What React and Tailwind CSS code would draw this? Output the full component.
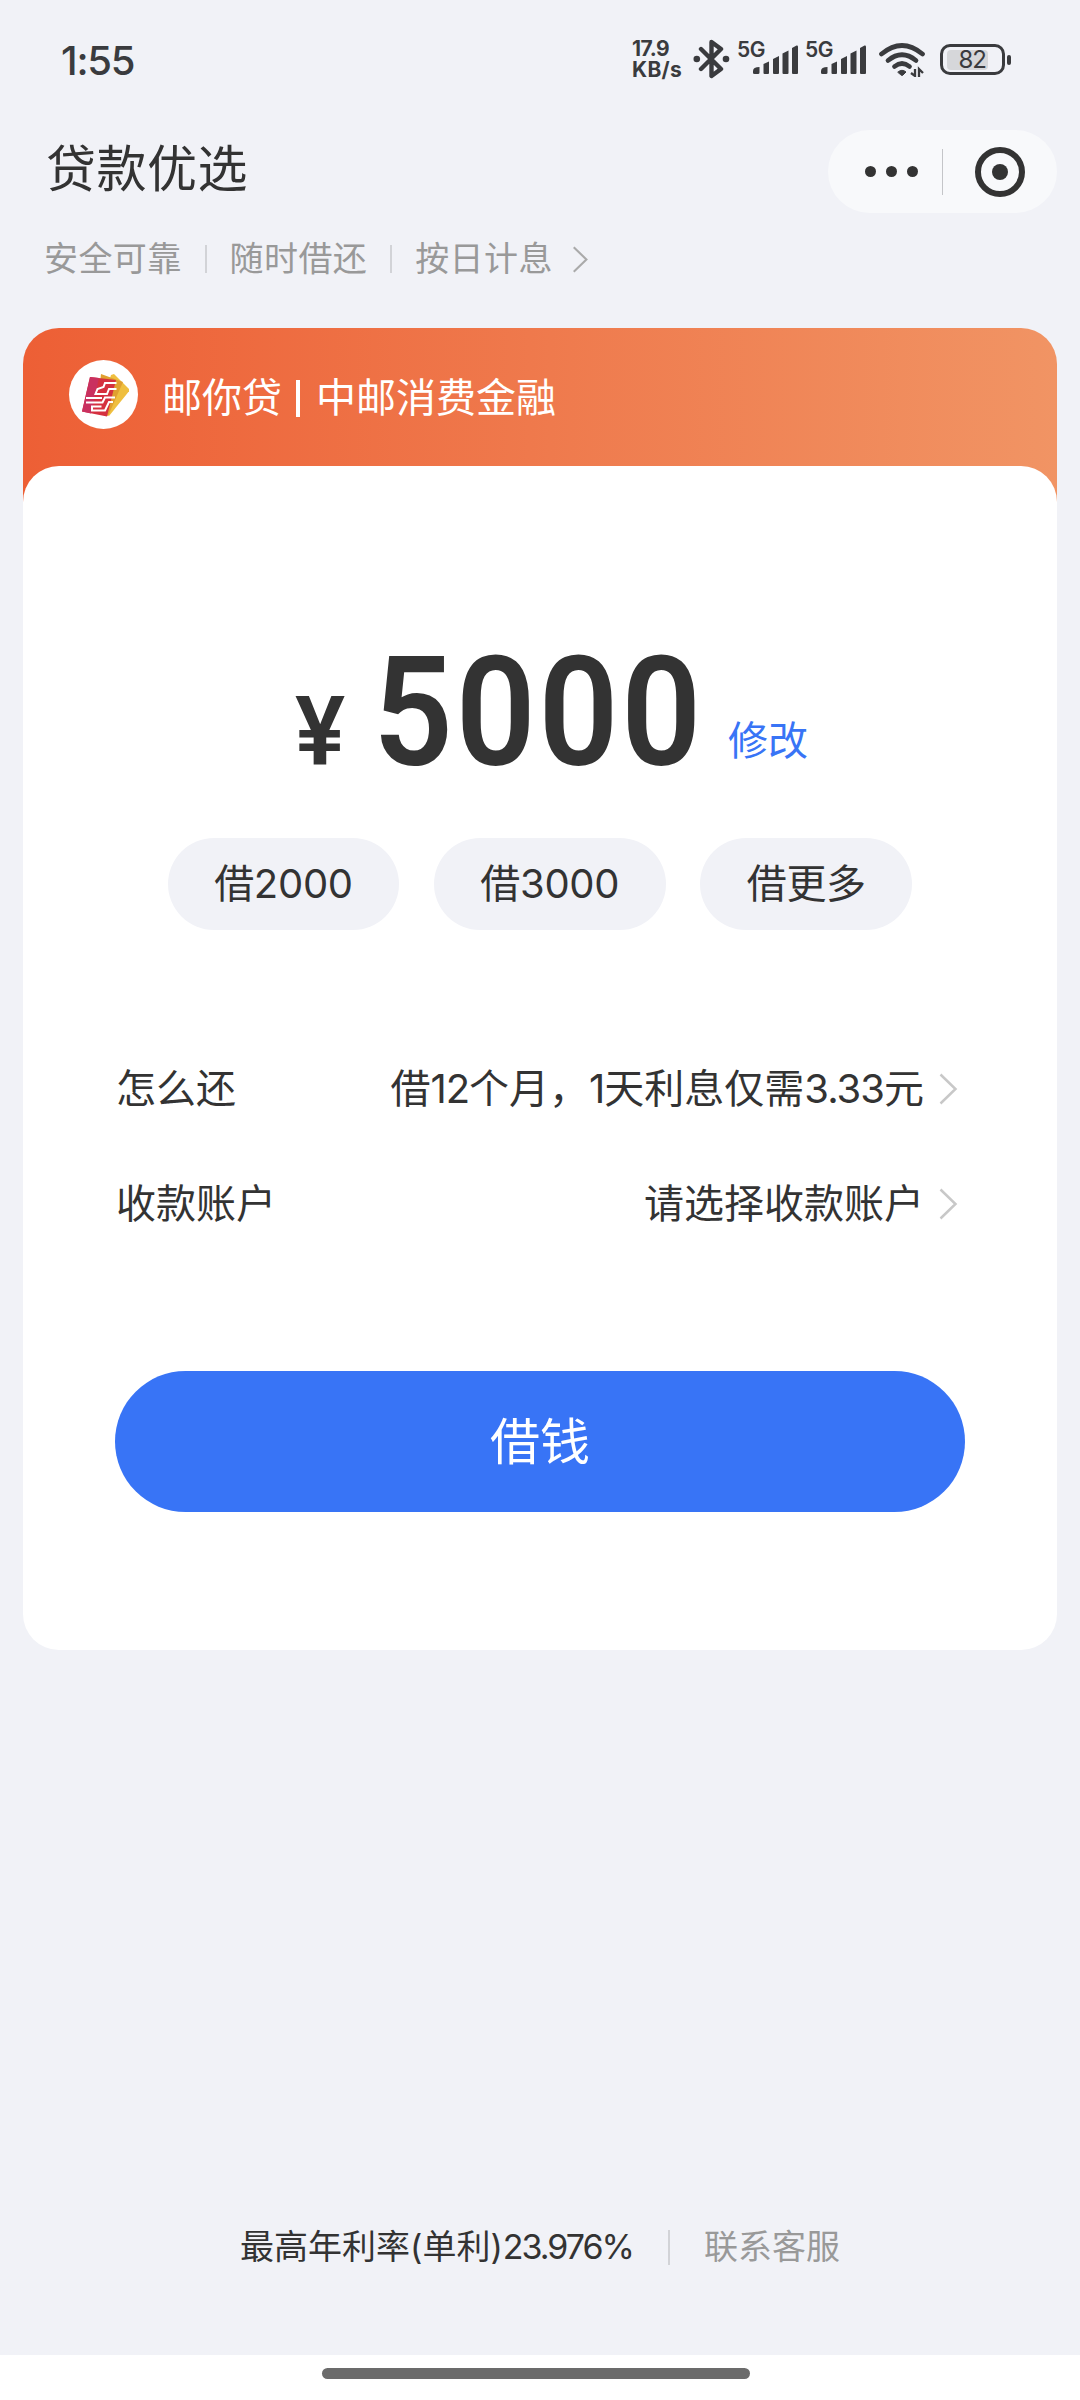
function Bluetooth() {
  return (
    <svg width="37" height="40" viewBox="0 0 37 40" fill="none" stroke="#3a3b3e" strokeWidth="4.4" strokeLinejoin="round" strokeLinecap="round">
      <path d="M8 10 L28 30 L18.500 37 V3 L28 10 L8 30" />
      <circle cx="3.800" cy="20" r="3.300" fill="#3a3b3e" stroke="none" />
      <circle cx="33" cy="20" r="3.300" fill="#3a3b3e" stroke="none" />
    </svg>
  )
}

function Signal() {
  return (
    <svg className="-ml-[11px] mt-[5px] shrink-0" width="45" height="30" viewBox="0 0 45 30" fill="#3a3b3e">
      <path d="M0 28V26Q0 22 6.500 22V27.500Q6.500 29 5 29H1.500Q0 29 0 28Z" />
      <path d="M10.500 19L16 16.500V28Q16 29 15 29H11.500Q10.500 29 10.500 28Z" />
      <path d="M20 14L26 11V28Q26 29 25 29H21Q20 29 20 28Z" />
      <path d="M29.500 8.500L35.500 5.500V28Q35.500 29 34.500 29H30.500Q29.500 29 29.500 28Z" />
      <path d="M39 3L43.500 .5Q45 .2 45 1.500V28Q45 29 44 29H40Q39 29 39 28Z" />
    </svg>
  )
}

function Wifi() {
  return (
    <svg width="46" height="34" viewBox="0 0 46 34" fill="none" stroke="#3a3b3e" strokeWidth="4.700" strokeLinecap="round">
      <path d="M2.500 11Q23-6 43.500 11" />
      <path d="M9 17.500Q23 6 37 17.500" />
      <path d="M15.500 23.500Q23 17.500 30.500 23.500" />
      <path d="M19 29Q23 25.500 27 29L24 32Q23 33 22 32Z" fill="#3a3b3e" strokeWidth="1" />
      <path d="M36 26V33L32 30M40 34V26L44 30" strokeWidth="2.300" strokeLinecap="butt" />
    </svg>
  )
}

function Network() {
  return (
    <div className="mt-[40px] flex h-[36px] w-[62px]">
      <span className="w-[27px] shrink-0 text-[21px] font-semibold leading-[19px] tracking-[-0.5px]">5G</span>
      <Signal />
    </div>
  )
}

function StatusBar() {
  return (
    <div className="flex h-[122px] items-start text-[#3a3b3e]">
      <div className="ml-[61px] mt-[37px] w-[90px] text-[40px] font-medium leading-[48px] tracking-[-1.2px]">1:55</div>
      <div className="ml-[481px] mt-[38px] w-[54px] text-[21px] font-bold leading-[21px]">
        <div className="tracking-[-0.5px]">17.9</div>
        <div className="tracking-[0.3px]">KB/s</div>
      </div>
      <div className="ml-[7px] mt-[39px]"><Bluetooth /></div>
      <div className="ml-[7px]"><Network /></div>
      <div className="ml-[6px]"><Network /></div>
      <div className="ml-[12px] mt-[43px]"><Wifi /></div>
      <div className="ml-[15px] mt-[44px] flex items-center">
        <div className="flex h-[31px] w-[65px] items-center rounded-[10px] border-[3px] border-[#3a3b3e] px-[4px]">
          <div className="flex h-[20px] w-[41px] items-center justify-end rounded-[4px] bg-[#d6d7da] pr-[2px] text-[24px] leading-[20px] tracking-[-1px]">82</div>
        </div>
        <div className="ml-[2px] h-[10px] w-[4px] rounded-[2px] bg-[#3a3b3e]" />
      </div>
    </div>
  )
}

function Chevron({ className, color }) {
  return (
    <svg className={className} width="19" height="32" viewBox="0 0 19 32" fill="none" stroke={color} strokeWidth="2.500">
      <path d="M1.500 1.500L16.500 16L1.500 30.500" />
    </svg>
  )
}

function Logo() {
  return (
    <div className="flex h-[69px] w-[69px] items-center justify-center rounded-full bg-white">
      <svg width="50" height="50" viewBox="0 0 50 50">
        <path d="M32 5L35 4L51 20L30 46L22 40Z" fill="#efbf3f" />
        <path d="M22 4L44 12L29 46L18 40Z" fill="#e0a030" />
        <path d="M11 7L37 10L28 46.500L3 41.500Z" fill="#d5303f" />
        <path d="M11 7L20 8L12 43.500L3 41.500Z" fill="#c9305f" />
        <path d="M37.500 13H26L24.500 17L18.500 19L16.500 24H28L30 19H37.500M7 28H23M7 32.500H23.500L26 27.500H36M34 32H30L26 40.500H13V36.500H22.500" fill="none" stroke="white" strokeWidth="2" />
      </svg>
    </div>
  )
}

function Pill({ children }) {
  return <button className="h-[92px] rounded-full bg-[#f1f2f7] px-[46.500px] text-[40px] tracking-[-0.3px] text-[#333]">{children}</button>
}

function Row({ label, value, className }) {
  return (
    <div className={'flex h-[60px] items-center pl-[1px] pr-[7px] text-[40px] leading-[60px] text-[#333] ' + className}>
      <span>{label}</span>
      <span className="ml-auto">{value}</span>
      <Chevron className="ml-[15px]" color="#c8c8c8" />
    </div>
  )
}

export default function App() {
  return (
    <div className={'flex h-[2400px] w-[1080px] flex-col whitespace-nowrap bg-[#f1f2f7] font-["Inter","Noto_Sans_CJK_SC",sans-serif]'}>
      <StatusBar />
      <header className="flex h-[206px]">
        <div className="ml-[44px]">
          <h1 className="ml-[2px] mt-[10px] h-[74px] text-[50px] leading-[74px] tracking-[0.5px] text-[#333]">贷款优选</h1>
          <div className="mt-[28px] flex h-[50px] items-center text-[34px] leading-[50px] tracking-[0.4px] text-[#999]">
            <span>安全可靠</span>
            <i className="mx-[23px] h-[28px] w-[2px] bg-[#d2d3d7]" />
            <span>随时借还</span>
            <i className="mx-[23px] h-[28px] w-[2px] bg-[#d2d3d7]" />
            <span>按日计息</span>
            <Chevron className="ml-[19px] h-[27px] w-[17px]" color="#aaa" />
          </div>
        </div>
        <div className="ml-auto mr-[23px] mt-[8px] flex h-[83px] w-[229px] items-center rounded-full bg-[#f8f9fb]">
          <div className="ml-[36.500px] flex gap-[10px]">
            <i className="h-[11px] w-[11px] rounded-full bg-[#333]" />
            <i className="h-[11px] w-[11px] rounded-full bg-[#333]" />
            <i className="h-[11px] w-[11px] rounded-full bg-[#333]" />
          </div>
          <i className="ml-[24px] h-[46px] w-px bg-[#c4c5c8]" />
          <div className="ml-[32px] flex h-[50px] w-[50px] items-center justify-center rounded-full border-[6px] border-[#333]">
            <i className="h-[16px] w-[16px] rounded-full bg-[#333]" />
          </div>
        </div>
      </header>

      <main className="mx-[23px] h-[1322px] rounded-[36px] bg-[linear-gradient(90deg,#ed5f35,#f19464)] bg-[length:100%_200px] bg-no-repeat">
        <div className="flex h-[138px] items-center">
          <div className="ml-[46px] -mt-[5px]"><Logo /></div>
          <div className="ml-[24px] mt-[2px] flex items-center text-[40px] leading-[60px] text-white">
            邮你贷
            <i className="ml-[14px] mr-[16px] h-[37px] w-[4px] bg-white" />
            中邮消费金融
          </div>
        </div>
        <section className="flex h-[1184px] flex-col rounded-[36px] bg-white px-[92px]">
          <div className="mt-[172px] flex h-[150px] items-baseline font-[Roboto] font-semibold leading-[150px] text-[#333]">
            <span className="ml-[180px] w-[78px] origin-left scale-x-[0.97] text-[97px]">¥</span>
            <span className="w-[355px] origin-left scale-x-[0.915] text-[153px] tracking-[3px]">5000</span>
            <span className='relative -top-[10px] font-["Noto_Sans_CJK_SC"] text-[40px] font-normal text-[#3874f6]'>修改</span>
          </div>
          <div className="mt-[50px] flex justify-center gap-[34.500px]">
            <Pill>借2000</Pill>
            <Pill>借3000</Pill>
            <Pill>借更多</Pill>
          </div>
          <Row className="mt-[129px]" label="怎么还" value={<>借<span className="tracking-[-1px]">12</span>个月，<span className="tracking-[-1px]">1</span>天利息仅需<span className="tracking-[-1px]">3.33</span>元</>} />
          <Row className="mt-[55px]" label="收款账户" value="请选择收款账户" />
          <button className="mt-[137px] h-[141px] w-[850px] rounded-full bg-[#3874f6] pt-[2px] text-[50px] text-white">借钱</button>
        </section>
      </main>

      <footer className="mt-auto">
        <div className="mb-[83px] flex h-[50px] items-center pl-[240px] text-[34px] leading-[50px] text-[#333]">
          <span>最高年利率(单利)<span className="tracking-[-2px]">23.976%</span></span>
          <i className="ml-[35px] mr-[34px] h-[35px] w-[2px] bg-[#d2d3d7]" />
          <span className="text-[#999]">联系客服</span>
        </div>
        <div className="h-[45px] bg-white pl-[322px] pt-[13px]">
          <div className="h-[11px] w-[428px] rounded-full bg-[#6b6b6b]" />
        </div>
      </footer>
    </div>
  )
}
